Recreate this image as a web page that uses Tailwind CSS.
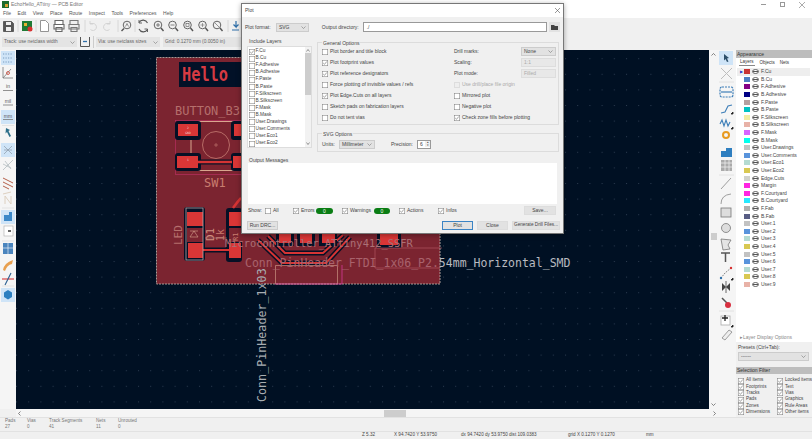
<!DOCTYPE html>
<html lang="en">
<head>
  <meta charset="utf-8" />
  <title>EchoHello_ATtiny — PCB Editor</title>
  <script src="https://cdn.jsdelivr.net/npm/@tailwindcss/browser@4"></script>
</head>
<body class="w-[812px] h-[439px] overflow-hidden bg-[#f0f0f0] font-['Liberation_Sans',sans-serif] text-[#333] text-[5px] leading-none">
<div class="relative flex flex-col w-[812px] h-[439px]">

  <!-- Title bar -->
  <div class="flex items-center h-[9px] bg-white text-[#777] pl-[2px]">
    <svg width="7" height="7" viewBox="0 0 7 7"><rect width="7" height="7" fill="#1d6b2c"/><rect x="3" y="3" width="3" height="3" fill="#d8a030"/></svg>
    <span class="ml-[2px] text-[5px]">EchoHello_ATtiny — PCB Editor</span>
    <div class="ml-auto flex items-center gap-[14px] pr-[7px] text-[#888]">
      <span class="w-[5px] h-[1px] bg-[#999]"></span>
      <span class="w-[5px] h-[5px] border border-[#999]"></span>
      <svg width="6" height="6" viewBox="0 0 6 6"><path d="M0 0L6 6M6 0L0 6" stroke="#888" stroke-width=".7"/></svg>
    </div>
  </div>
  <!-- Menu -->
  <div class="flex items-center h-[9px] bg-white text-[#555] text-[5px] pl-[3px] gap-[6.5px]">
    <span>File</span><span>Edit</span><span>View</span><span>Place</span><span>Route</span><span>Inspect</span><span>Tools</span><span>Preferences</span><span>Help</span>
  </div>
  <!-- Main toolbar -->
  <div class="flex items-center h-[16px] pl-[3px]">
    <svg width="236" height="16" viewBox="3 18 236 16" fill="none" stroke="#555" stroke-width=".9">
      <path d="M3.5 21.5h8l2 2v8h-10z" fill="#555"/><rect x="6" y="22" width="5" height="3" fill="#eee" stroke="none"/><rect x="6" y="27" width="5" height="4" fill="#eee" stroke="none"/>
      <path d="M18 20v12M36 20v12M85 20v12M118 20v12M135 20v12M228 20v12" stroke="#d4d4d4"/>
      <rect x="22" y="21" width="10" height="10" fill="#1f7a35" stroke="none"/><rect x="24" y="23" width="3" height="3" fill="#e8b030" stroke="none"/><circle cx="30" cy="29" r="2.5" fill="#d83030" stroke="none"/>
      <path d="M40.5 20.5h5l3 3v8h-8z" fill="#fff" stroke="#888"/>
      <path d="M55 24v-3.500h8v3.500M54 24.500h10v4.500h-10zM56 27.500h6v4h-6z" fill="#fff" stroke="#666" stroke-width="1.100"/>
      <path d="M70 24v-3.500h8v3.500M69 24.500h10v4.500h-10zM71 27.500h6v4h-6z" fill="#eee" stroke="#777" stroke-width="1.100"/>
      <path d="M90 23.500h3a3.500 3.500 0 1 1-2.500 6M90 21v3h3" stroke="#d0d0d0"/>
      <path d="M110 23.500h-3a3.500 3.500 0 1 0 2.500 6M110 21v3h-3" stroke="#d0d0d0"/>
      <circle cx="127" cy="25" r="3.800"/><path d="M124 28.500l-2.500 2.500" stroke-width="1.400"/><path d="M125.500 26.500l1.500-3 1.500 3" stroke-width=".6"/>
      <path d="M147.500 23a4.800 4.800 0 0 0-8.500-.5M139 29a4.800 4.800 0 0 0 8.500.5" stroke-width="1.100"/><path d="M139 20v3h3M147.500 32v-3h-3"/>
      <circle cx="158" cy="25" r="3.800"/><path d="M161 28l2.500 3" stroke-width="1.400"/><path d="M156 25h4M158 23v4" stroke-width=".7"/>
      <circle cx="172.500" cy="25" r="3.800"/><path d="M175.500 28l2.500 3" stroke-width="1.400"/><path d="M170.500 25h4" stroke-width=".7"/>
      <circle cx="187.500" cy="25" r="3.800"/><path d="M190.500 28l2.500 3" stroke-width="1.400"/><rect x="186" y="23.500" width="3" height="3" stroke-width=".6"/>
      <circle cx="202.500" cy="25" r="3.800"/><path d="M205.500 28l2.500 3" stroke-width="1.400"/><path d="M200.500 25h4M202.500 23v4" stroke-width=".5"/>
      <circle cx="217" cy="25" r="3.800"/><path d="M220 28l2.500 3" stroke-width="1.400"/><path d="M215 23l4 4" stroke-width=".6"/>
      <path d="M232 30h7M236 21v6l-2.500-2.500M236 27l2.500-2.500" stroke="#2f6fa8" stroke-width="1.200"/>
    </svg>
  </div>
  <!-- Track / via / grid toolbar -->
  <div class="flex items-center h-[16px] pl-[2px] text-[#666] text-[4.8px]">
    <div class="flex items-center justify-between w-[75px] h-[10px] bg-[#e4e4e4] px-[2px]"><span>Track: use netclass width</span><svg width="5" height="3" viewBox="0 0 5 3"><path d="M.5.5l2 2 2-2" fill="none" stroke="#777" stroke-width=".6"/></svg></div>
    <svg class="ml-[2px]" width="12" height="12" viewBox="0 0 12 12" fill="none"><path d="M1.500 1v9.500h9V1" stroke="#555"/><path d="M4 5.500h4" stroke="#2f6fa8" stroke-width="1.300"/></svg>
    <span class="w-[1px] h-[12px] bg-[#ccc] ml-[2px]"></span>
    <div class="flex items-center justify-between w-[64px] h-[10px] bg-[#e4e4e4] px-[2px] ml-[2px]"><span>Via: use netclass sizes</span><svg width="5" height="3" viewBox="0 0 5 3"><path d="M.5.5l2 2 2-2" fill="none" stroke="#777" stroke-width=".6"/></svg></div>
    <div class="flex items-center w-[78px] h-[10px] bg-[#e4e4e4] px-[2px] ml-[3px]"><span>Grid: 0.1270 mm (0.0050 in)</span></div>
  </div>

  <!-- Workspace -->
  <div class="flex flex-1 min-h-0">
    <div class="flex flex-col flex-1 min-w-0">
      <div class="flex flex-1 min-h-0">
        <!-- Left toolbar -->
        <div class="w-[16px] bg-[#f5f5f5] shrink-0">
          <svg width="16" height="359" viewBox="0 50 16 359" fill="none" stroke="#666" stroke-width=".8" font-family="'Liberation Sans', sans-serif">
            <g fill="#cfe4f7" stroke="none"><rect x="1" y="51" width="14" height="14"/><rect x="1" y="110" width="14" height="14"/><rect x="1" y="143" width="14" height="14"/><rect x="1" y="210" width="14" height="14"/><rect x="1" y="288" width="14" height="14"/></g>
            <path d="M3 54h10M3 58h10M3 62h10" stroke="#7a9cc0" stroke-width="1.200" stroke-dasharray="1.200 1.300"/>
            <path d="M3 67v11h10M3 78l8-9" stroke="#777"/><circle cx="8" cy="73" r="1.500" stroke="#c43"/>
            <text x="8" y="88" font-size="5" fill="#555" stroke="none" text-anchor="middle">in</text><path d="M3 90.500h10" stroke="#777"/>
            <text x="8" y="103" font-size="5" fill="#555" stroke="none" text-anchor="middle">mil</text><path d="M3 105h10" stroke="#777"/>
            <text x="8" y="118" font-size="5" fill="#555" stroke="none" text-anchor="middle">mm</text><path d="M3 119.500h10" stroke="#777"/>
            <path d="M6 128l4 2-1.500 1 2.500 5-1.500 1-2.500-5-1.500 1.500z" fill="#2d6f8a" stroke="none"/>
            <path d="M4 146l8 8M12 146l-8 8M4 150h8" stroke="#8a99a6" stroke-width=".7"/>
            <path d="M3 170l10-10M5 161l6 8M3 164l8 4" stroke="#b4bcc0" stroke-width=".8"/>
            <path d="M3 178l10 5M3 182l10 5M3 186l6 3" stroke="#b5604a" stroke-width="1"/>
            <path d="M3 194l8-2M5 204v-8l6 8v-8" stroke="#ddd0c0" stroke-width="1"/>
            <path d="M4 221v-6h5v-3h3v9z" fill="#3c88c8" stroke="none"/>
            <rect x="4" y="226" width="9" height="10" stroke="#aaa" fill="#fff" stroke-width=".6"/><path d="M8 230h3v2h-3z" fill="#666" stroke="none"/>
            <rect x="3" y="243" width="10" height="11" fill="#4a84bd" stroke="none"/><path d="M3 248h10M8 243v11" stroke="#fff" stroke-width=".6"/>
            <path d="M3 270q1-7 10-10l-1 4q-5 1-7 7z" fill="#e8a050" stroke="none"/>
            <path d="M2 279h12" stroke="#d83a3a" stroke-width="1.100"/><path d="M11 273l-6 12" stroke="#2b5f90" stroke-width="1.100"/>
            <path d="M8 290l4 2.500v4.500l-4 2.500-4-2.500v-4.500z" fill="#2c7fc0" stroke="none"/>
            <path d="M2 125.500h12M2 208h12M2 241h12M2 286h12" stroke="#ddd" stroke-width=".7"/>
          </svg>
        </div>
        <!-- Canvas -->
        <div class="relative flex-1 min-w-0 bg-[#001023] overflow-hidden">
          <svg class="absolute inset-0 w-full h-full" viewBox="16 50 693 359" fill="none" font-family="'DejaVu Sans Mono', monospace">
            <defs>
              <pattern id="dots" x="16" y="42.600" width="12.200" height="15.600" patternUnits="userSpaceOnUse"><rect width="1" height="1" fill="#2c3c50"/></pattern>
              <linearGradient id="connfill" gradientUnits="userSpaceOnUse" x1="245" y1="0" x2="570" y2="0">
                <stop offset="0.6" stop-color="#a9626c"/><stop offset="0.6" stop-color="#b9bcc2"/>
              </linearGradient>
            </defs>
            <rect x="16" y="50" width="693" height="359" fill="url(#dots)"/>
            <!-- board -->
            <rect x="156.500" y="57.500" width="283.500" height="226.500" fill="#7b2430" stroke="#a89a96" stroke-dasharray="2 1"/>
            <rect x="179" y="62" width="70" height="25" fill="#021127"/>
            <text x="182" y="81" font-size="19" font-weight="bold" fill="#d63a42" textLength="46" lengthAdjust="spacingAndGlyphs">Hello</text>
            <text x="175" y="115" font-size="12" fill="#b56f6c">BUTTON_B3</text>
            <!-- SW1 -->
            <rect x="175.500" y="120.500" width="82" height="54" stroke="#b83060" stroke-width=".7"/>
            <rect x="191" y="121.500" width="50" height="49" stroke="#d9a58e" stroke-width="1"/>
            <circle cx="216" cy="145" r="13.500" stroke="#d08a7d" stroke-width=".7"/>
            <path d="M214 145h4M216 143v4" stroke="#d08a7d" stroke-width=".5"/>
            <rect x="175" y="121" width="26" height="19" rx="3" fill="#061025"/><rect x="231" y="121" width="26" height="19" rx="3" fill="#061025"/>
            <rect x="175" y="153" width="26" height="18" rx="3" fill="#061025"/><rect x="231" y="153" width="26" height="18" rx="3" fill="#061025"/>
            <path d="M198 162h34" stroke="#061025" stroke-width="5"/><path d="M198 162h34" stroke="#d63434" stroke-width="2.500"/>
            <rect x="178" y="124" width="20" height="12" fill="#d93636"/><rect x="234" y="124" width="20" height="12" fill="#d93636"/>
            <rect x="177" y="156" width="21" height="12" fill="#d93636"/><rect x="233" y="156" width="21" height="12" fill="#d93636"/>
            <text x="188" y="129" font-size="3" fill="#f0d0d0" text-anchor="middle">2</text><text x="188" y="134" font-size="3" fill="#f0d0d0" text-anchor="middle">GND</text>
            <text x="188" y="161" font-size="3" fill="#f0d0d0" text-anchor="middle">1</text>
            <text x="204" y="187" font-size="12" fill="#c97d6f">SW1</text>
            <!-- LED / R1 -->
            <rect x="184" y="207" width="21" height="54" rx="3" fill="#061025"/><rect x="226" y="208" width="16" height="54" rx="3" fill="#061025"/>
            <rect x="187" y="228" width="16" height="14" fill="#7b2430"/><rect x="229" y="228" width="13" height="14" fill="#7b2430"/>
            <path d="M200 250h30" stroke="#061025" stroke-width="5"/><path d="M200 250h30" stroke="#d63434" stroke-width="2"/>
            <rect x="187" y="212" width="16" height="14" fill="#d93636"/><rect x="188" y="243" width="15" height="15" fill="#d93636"/>
            <rect x="229" y="212" width="12" height="14" fill="#d93636"/><rect x="229" y="243" width="12" height="15" fill="#d93636"/>
            <rect x="186" y="208" width="17" height="52" stroke="#b8a8a8" stroke-width=".8"/>
            <path d="M190 237h8l-4-6zM190 231h8" stroke="#d9a58e" stroke-width=".6"/>
            <path d="M233 208q6-8 8-10" stroke="#d63434" stroke-width="2.500"/>
            <text transform="translate(182 245) rotate(-90)" font-size="11" fill="#b56f6c">LED</text>
            <text transform="translate(214 241) rotate(-90)" font-size="11" fill="#d09080">D1</text>
            <text transform="translate(224 241) rotate(-90)" font-size="10" fill="#c97d6f">1k</text>
            <text transform="translate(238 241) rotate(-90)" font-size="7" fill="#c97d6f">R1</text>
            <path d="M205 238h22" stroke="#b0827a" stroke-width=".6"/>
            <!-- MCU pads and traces -->
            <path d="M258 240l24 23h44l24-26M268 236l17 17h38l20-18" stroke="#061025" stroke-width="5"/>
            <path d="M258 240l24 23h44l24-26M268 236l17 17h38l20-18" stroke="#d63434" stroke-width="2"/>
            <rect x="276" y="230" width="18" height="16" fill="#061025"/><rect x="297" y="230" width="18" height="16" fill="#061025"/><rect x="319" y="230" width="18" height="16" fill="#061025"/><rect x="377" y="230" width="24" height="18" fill="#061025"/>
            <rect x="279" y="230" width="12" height="13" fill="#d93636"/><rect x="300" y="230" width="12" height="13" fill="#d93636"/><rect x="322" y="230" width="13" height="13" fill="#d93636"/><rect x="380" y="230" width="18" height="15" fill="#d93636"/>
            <path d="M275.500 265.500h62v18.500h-62z" stroke="#d9a58e" stroke-width=".6"/>
            <path d="M275 284h67v-19" stroke="#d63a9a" stroke-width=".8"/>
            <path d="M375 248h67M375 248v20h65" stroke="#b85a6a" stroke-width=".6"/>
            <text x="225" y="247" font-size="10.400" fill="#ab7076">Microcontroller_ATtiny412_SSFR</text>
            <text x="245" y="267" font-size="11.500" fill="url(#connfill)">Conn_PinHeader_FTDI_1x06_P2.54mm_Horizontal_SMD</text>
            <text transform="translate(266 402) rotate(-90)" font-size="11.700" fill="#a8adb2">Conn_PinHeader_1x03</text>
          </svg>
        </div>
        <!-- Vertical scrollbar -->
        <div class="flex flex-col items-center justify-between w-[9px] py-[3px] bg-[#f5f5f5] text-[#555] shrink-0">
          <svg width="5" height="3" viewBox="0 0 5 3"><path d="M.5 2.500l2-2 2 2" fill="none" stroke="#555" stroke-width=".7"/></svg>
          <span class="w-[6px] h-[7px] bg-[#cdcdcd] mt-[14px]"></span>
          <svg width="5" height="3" viewBox="0 0 5 3"><path d="M.5.500l2 2 2-2" fill="none" stroke="#555" stroke-width=".7"/></svg>
        </div>
      </div>
      <!-- Horizontal scrollbar -->
      <div class="flex items-center justify-between h-[8px] ml-[16px] bg-[#f5f5f5] px-[2px]">
        <svg width="3" height="5" viewBox="0 0 3 5"><path d="M2.500.500l-2 2 2 2" fill="none" stroke="#555" stroke-width=".7"/></svg>
        <span class="w-[22px] h-[7px] bg-[#cdcdcd] ml-[56px]"></span>
        <svg width="3" height="5" viewBox="0 0 3 5"><path d="M.5.500l2 2-2 2" fill="none" stroke="#555" stroke-width=".7"/></svg>
      </div>
    </div>

    <!-- Right toolbar -->
    <div class="w-[18px] bg-[#f5f5f5] shrink-0">
      <svg width="18" height="367" viewBox="718 50 18 367" fill="none" stroke="#777" stroke-width=".8">
        <rect x="719" y="51" width="14" height="14" fill="#cfe4f7" stroke="none"/>
        <path d="M724 54l5 4-2 .5 1.500 3-1.500.5-1.500-3-1.500 1.500z" fill="#2d4f6a" stroke="none"/>
        <path d="M721 68l11 11M732 68l-11 11" stroke="#bdbdbd" stroke-width="1"/>
        <path d="M719 82h15" stroke="#ddd"/>
        <rect x="720" y="87" width="13" height="10" rx="2" stroke="#3f7fb8" stroke-dasharray="2 1" stroke-width="1.200"/><path d="M721 92h11" stroke="#3f7fb8" stroke-width="1.200"/>
        <path d="M721 113l4-1 3-6 4-1" stroke="#3f7fb8" stroke-width="1.100"/><path d="M731 114h2v-2z" fill="#222" stroke="#222"/>
        <path d="M720 124l2-4 2 6 2-6 2 6 2-4" stroke="#3f7fb8" stroke-width="1.100"/><path d="M731 129h2v-2z" fill="#222" stroke="#222"/>
        <circle cx="726" cy="135" r="3" stroke="#e89a20" stroke-width="2"/>
        <path d="M721 157v-6h5v-3h6v9z" fill="#2f7fc0" stroke="none"/>
        <rect x="721" y="160" width="11" height="11" fill="#aaa" stroke="none"/><path d="M721 163h11M721 167h11M725 160v11M729 160v11" stroke="#eee" stroke-width=".8"/>
        <path d="M719 175h15" stroke="#ddd"/>
        <path d="M721 189l10-11" stroke="#888"/>
        <path d="M721 204q0-9 10-10" stroke="#888"/>
        <rect x="721" y="208" width="10" height="9" fill="#ddd" stroke="#777"/>
        <circle cx="726" cy="228" r="4.500" fill="#ddd" stroke="#777"/>
        <path d="M721 239l10 1-3 5 2 4-7 1z" fill="#e4e4e4" stroke="#777"/>
        <path d="M721 253h9M725.500 253v9" stroke="#555" stroke-width="1.500"/>
        <path d="M721 278l4-5 6-5" stroke="#666" stroke-dasharray="1.500 1"/><circle cx="721" cy="278" r="1.200" fill="#2f6fa8" stroke="none"/><circle cx="731" cy="268" r="1.200" fill="#d83030" stroke="none"/><path d="M731 280h2v-2z" fill="#222" stroke="#222"/>
        <path d="M722 283l4 4-4 4zM730 283l-4 4 4 4z" fill="#444" stroke="none"/><path d="M726 281v12" stroke="#444"/>
        <path d="M722 298l5 5" stroke="#555" stroke-width="1.500"/><circle cx="728" cy="305" r="3" fill="#d83040" stroke="none"/>
        <path d="M719 311h15" stroke="#ddd"/>
        <rect x="721" y="316" width="9" height="9" stroke="#aaa" fill="#fff"/><path d="M725 315v6M722 318h6" stroke="#222" stroke-width="1.300"/><path d="M731 327h2v-2z" fill="#222" stroke="#222"/>
        <path d="M722 338l7-8 3 2-7 8z" stroke="#888" fill="#eee"/>
      </svg>
    </div>

    <!-- Appearance + selection filter -->
    <div class="flex flex-col w-[76px] shrink-0 text-[#444]">
      <div class="flex items-center h-[8px] bg-[#bdbdbd] pl-[1px] text-[#333]">Appearance</div>
      <div class="flex flex-col h-[284px] bg-white">
        <div class="flex items-center gap-[5px] h-[10px] pl-[3px] text-[4.500px] text-[#333]">
          <span class="px-[1px] border-b border-[#888]">Layers</span><span>Objects</span><span>Nets</span>
        </div>
        <div id="layers" class="flex flex-col ml-[1px]"></div>
        <div class="mt-auto h-[9px] flex items-center pl-[4px] text-[#888]">▸Layer Display Options</div>
      </div>
      <div class="flex-1 flex flex-col bg-[#f0f0f0]">
        <span class="mt-[3px] ml-[2px]">Presets (Ctrl+Tab):</span>
        <div class="flex items-center justify-between w-[71px] h-[9px] mt-[2px] ml-[2px] bg-[#e2e2e2] border border-[#ccc] px-[2px]"><span>------</span><svg width="5" height="3" viewBox="0 0 5 3"><path d="M.5.500l2 2 2-2" fill="none" stroke="#777" stroke-width=".6"/></svg></div>
        <div class="flex items-center h-[7px] mt-[6px] bg-[#bdbdbd] pl-[1px] text-[#333]">Selection Filter</div>
        <div id="filter" class="grid grid-cols-[39px_1fr] auto-rows-[6.300px] pl-[2px] pt-[3.500px] text-[4.600px]"></div>
      </div>
    </div>
  </div>

  <!-- Message panel -->
  <div class="flex h-[14px] pl-[5px] text-[#777] text-[4.600px] border-t border-[#e2e2e2]">
    <div class="w-[22px] flex flex-col gap-[1.500px] pt-[1px]"><span>Pads</span><span>27</span></div>
    <div class="w-[22px] flex flex-col gap-[1.500px] pt-[1px]"><span>Vias</span><span>0</span></div>
    <div class="w-[47px] flex flex-col gap-[1.500px] pt-[1px]"><span>Track Segments</span><span>41</span></div>
    <div class="w-[22px] flex flex-col gap-[1.500px] pt-[1px]"><span>Nets</span><span>11</span></div>
    <div class="flex flex-col gap-[1.500px] pt-[1px]"><span>Unrouted</span><span>0</span></div>
  </div>
  <!-- Status bar -->
  <div class="flex items-center h-[8px] pl-[362px] text-[#444] text-[4.600px] border-t border-[#e2e2e2]">
    <span class="w-[32px]">Z 5.32</span><span class="w-[67px]">X 94.7420 Y 53.9750</span><span class="w-[107px]">dx 94.7420 dy 53.9750 dist 109.0383</span><span class="w-[78px]">grid X 0.1270 Y 0.1270</span><span>mm</span>
  </div>

  <!-- Plot dialog -->
  <div class="absolute left-[241px] top-[3px] w-[323px] h-[231px] flex flex-col bg-[#f0f0f0] border border-[#777] shadow-[0_1px_5px_rgba(0,0,0,0.35)] text-[#444] text-[5px]">
    <div class="flex items-center justify-between h-[13px] bg-white pl-[3px] pr-[3px] shrink-0">
      <span>Plot</span>
      <svg width="5" height="5" viewBox="0 0 5 5"><path d="M0 0L5 5M5 0L0 5" stroke="#555" stroke-width=".6"/></svg>
    </div>
    <div class="flex items-center h-[20px] pl-[3px] pr-[3px] shrink-0">
      <span class="w-[31px]">Plot format:</span>
      <div class="flex items-center justify-between w-[33px] h-[9px] bg-[#e2e2e2] border border-[#ccc] px-[2px]"><span>SVG</span><svg width="5" height="3" viewBox="0 0 5 3"><path d="M.5.500l2 2 2-2" fill="none" stroke="#777" stroke-width=".6"/></svg></div>
      <span class="ml-[13px] w-[41px]">Output directory:</span>
      <div class="w-[185px] h-[10px] bg-white border border-[#999] flex items-center pl-[3px]">./</div>
      <div class="ml-[2px] w-[11px] h-[10px] bg-[#e2e2e2] flex items-center justify-center"><svg width="7" height="5" viewBox="0 0 7 5"><path d="M0 0h3l1 1h3v4h-7z" fill="#444"/></svg></div>
    </div>
    <div class="flex pl-[5px] pr-[4px] shrink-0">
      <div class="w-[70px] shrink-0">
        <div class="pl-[2px] pt-[2px] h-[9px]">Include Layers</div>
        <div class="relative flex w-[65px] h-[102px] overflow-hidden bg-white border border-[#ddd]">
          <div id="plotlayers" class="flex flex-col pl-[1px] pt-[1px] flex-1 text-[4.800px]"></div>
          <div class="flex flex-col items-center justify-between w-[6px] py-[2px] bg-[#f2f2f2]">
            <svg width="4" height="3" viewBox="0 0 4 3"><path d="M.5 2.500l1.500-2 1.500 2" fill="none" stroke="#555" stroke-width=".6"/></svg>
            <span class="w-[6px] h-[42px] bg-[#cdcdcd] mb-[47px]"></span>
            <svg width="4" height="3" viewBox="0 0 4 3"><path d="M.5.500l1.500 2 1.500-2" fill="none" stroke="#555" stroke-width=".6"/></svg>
          </div>
        </div>
      </div>
      <div class="flex flex-col flex-1">
        <div class="h-[83px] border border-[#dcdcdc] mt-[5px] relative">
          <span class="absolute left-[4px] -top-[2px] bg-[#f0f0f0] px-[1px]">General Options</span>
          <div class="flex pl-[4px] pt-[3px]">
            <div id="genleft" class="flex flex-col w-[132px]"></div>
            <div class="flex flex-col w-[102px]">
              <div class="flex items-center justify-between h-[11px]"><span>Drill marks:</span><div class="flex items-center justify-between w-[35px] h-[9px] bg-[#e2e2e2] border border-[#ccc] px-[2px]"><span>None</span><svg width="5" height="3" viewBox="0 0 5 3"><path d="M.5.500l2 2 2-2" fill="none" stroke="#777" stroke-width=".6"/></svg></div></div>
              <div class="flex items-center justify-between h-[11px]"><span>Scaling:</span><div class="flex items-center w-[35px] h-[9px] bg-[#e8e8e8] border border-[#ddd] px-[2px] text-[#aaa]">1:1</div></div>
              <div class="flex items-center justify-between h-[11px]"><span>Plot mode:</span><div class="flex items-center w-[35px] h-[9px] bg-[#e8e8e8] border border-[#ddd] px-[2px] text-[#aaa]">Filled</div></div>
              <div id="genright" class="flex flex-col"></div>
            </div>
          </div>
        </div>
        <div class="flex items-center h-[19px] mt-[8px] border border-[#dcdcdc] relative pl-[4px]">
          <span class="absolute left-[4px] -top-[2px] bg-[#f0f0f0] px-[1px]">SVG Options</span>
          <span class="w-[17px] mt-[3px]">Units:</span>
          <div class="flex items-center justify-between w-[36px] h-[9px] mt-[3px] bg-[#e2e2e2] border border-[#ccc] px-[2px]"><span>Millimeter</span><svg width="5" height="3" viewBox="0 0 5 3"><path d="M.5.500l2 2 2-2" fill="none" stroke="#777" stroke-width=".6"/></svg></div>
          <span class="ml-[16px] w-[26px] mt-[3px]">Precision:</span>
          <div class="flex items-center justify-between w-[14px] h-[9px] mt-[3px] bg-white border border-[#999] pl-[2px]"><span>6</span><span class="flex flex-col items-center w-[5px] text-[3px] bg-[#eee]"><span>▴</span><span>▾</span></span></div>
        </div>
      </div>
    </div>
    <!-- Output messages -->
    <div class="mt-[6px] mx-[5px] pl-[2px] h-[5px] shrink-0">Output Messages</div>
    <div class="mx-[6px] h-[41px] bg-white shrink-0"></div>
    <div class="flex items-center h-[11px] mt-[1px] mx-[6px] shrink-0">
      <span class="w-[17px]">Show:</span>
      <div id="c-all" class="w-[28px]"></div>
      <div id="c-err" class="w-[23px]"></div>
      <span class="w-[17px] h-[6px] rounded-full bg-[#0a7d14] text-center text-white leading-[6px]">0</span>
      <div id="c-warn" class="ml-[9px] w-[32px]"></div>
      <span class="w-[16px] h-[6px] rounded-full bg-[#0a7d14] text-center text-white leading-[6px]">0</span>
      <div id="c-act" class="ml-[9px] w-[39px]"></div>
      <div id="c-inf" class="w-[30px]"></div>
      <div class="ml-auto mr-[1px] flex items-center justify-center w-[32px] h-[9px] bg-[#e2e2e2] border border-[#ddd]">Save...</div>
    </div>
    <div class="flex items-center mt-[5px] ml-[5px] mr-[3px] h-[9px] shrink-0">
      <div class="flex items-center justify-center w-[31px] h-[9px] bg-[#e2e2e2] border border-[#ccc]">Run DRC...</div>
      <div class="ml-auto flex items-center justify-center w-[31px] h-[9px] bg-[#e2e2e2] border border-[#3b84c4]">Plot</div>
      <div class="ml-[4px] flex items-center justify-center w-[31px] h-[9px] bg-[#e2e2e2] border border-[#ddd]">Close</div>
      <div class="ml-[4px] flex items-center justify-center w-[48px] h-[9px] bg-[#e2e2e2] border border-[#ddd] whitespace-nowrap text-[4.700px]">Generate Drill Files...</div>
    </div>
  </div>
</div>

<script>
  const box = on => `<svg class="shrink-0" width="6" height="6" viewBox="0 0 6 6"><rect x=".25" y=".25" width="5.500" height="5.500" fill="#fff" stroke="#777" stroke-width=".5"/>${on ? '<path d="M1.200 3l1.300 1.300L4.800 1.500" fill="none" stroke="#666" stroke-width=".6"/>' : ''}</svg>`;
  const check = (label, on) => `<div class="flex items-center gap-[2px] whitespace-nowrap">${box(on)}<span>${label}</span></div>`;
  const row = (label, on) => `<div class="flex items-center gap-[2px] h-[11px] whitespace-nowrap">${box(on)}<span>${label}</span></div>`;
  const eye = '<svg width="7" height="5" viewBox="0 0 7 5"><ellipse cx="3.500" cy="2.500" rx="3" ry="2" fill="#fff" stroke="#444" stroke-width=".8"/><path d="M1 2.500h5" stroke="#444" stroke-width=".9"/></svg>';

  const layers = [
    ['F.Cu', 'bg-[#c83434]'], ['B.Cu', 'bg-[#4d7fc4]'], ['F.Adhesive', 'bg-[#840084]'], ['B.Adhesive', 'bg-[#000084]'],
    ['F.Paste', 'bg-[#b4a0a0]'], ['B.Paste', 'bg-[#00c2c2]'], ['F.Silkscreen', 'bg-[#f2eda1]'], ['B.Silkscreen', 'bg-[#e8b2a7]'],
    ['F.Mask', 'bg-[#d864ff]'], ['B.Mask', 'bg-[#02ffee]'], ['User.Drawings', 'bg-[#c2c2c2]'], ['User.Comments', 'bg-[#5994dc]'],
    ['User.Eco1', 'bg-[#b4dbd2]'], ['User.Eco2', 'bg-[#d8c852]'], ['Edge.Cuts', 'bg-[#d0d2cd]'], ['Margin', 'bg-[#ff26e2]'],
    ['F.Courtyard', 'bg-[#ff26e2]'], ['B.Courtyard', 'bg-[#26e9ff]'], ['F.Fab', 'bg-[#afafaf]'], ['B.Fab', 'bg-[#585d84]'],
    ['User.1', 'bg-[#c2c2c2]'], ['User.2', 'bg-[#5994dc]'], ['User.3', 'bg-[#b4dbd2]'], ['User.4', 'bg-[#d8c852]'],
    ['User.5', 'bg-[#c2c2c2]'], ['User.6', 'bg-[#5994dc]'], ['User.7', 'bg-[#b4dbd2]'], ['User.8', 'bg-[#d8c852]'], ['User.9', 'bg-[#e8b2a7]']
  ];
  document.getElementById('layers').innerHTML = layers.map(([name, color], i) => `
    <div class="relative flex items-center h-[7.600px] pl-[7px] gap-[2px] whitespace-nowrap ${i === 0 ? 'bg-[#eeeeee] w-[73px]' : ''}">
      ${i === 0 ? '<span class="absolute left-[3px] text-[4px] text-[#2233cc]">▶</span>' : ''}
      <span class="w-[6px] h-[5px] ${color}"></span>${eye}<span>${name}</span>
    </div>`).join('');

  const plotList = ['F.Cu', 'B.Cu', 'F.Adhesive', 'B.Adhesive', 'F.Paste', 'B.Paste', 'F.Silkscreen', 'B.Silkscreen', 'F.Mask', 'B.Mask', 'User.Drawings', 'User.Comments', 'User.Eco1', 'User.Eco2'];
  document.getElementById('plotlayers').innerHTML = plotList.map((name, i) => `<div class="flex items-center gap-[0.500px] h-[7.100px] whitespace-nowrap">${box(i === 0)}<span>${name}</span></div>`).join('');

  document.getElementById('genleft').innerHTML = [
    ['Plot border and title block', false], ['Plot footprint values', true], ['Plot reference designators', true],
    ['Force plotting of invisible values / refs', false], ['Plot Edge.Cuts on all layers', true],
    ['Sketch pads on fabrication layers', false], ['Do not tent vias', false]
  ].map(r => row(...r)).join('');

  document.getElementById('genright').innerHTML =
    '<div class="flex items-center gap-[2px] h-[11px] text-[#aaa] whitespace-nowrap"><span class="w-[6px] h-[6px] bg-[#eee] border-[0.5px] border-[#ddd]"></span><span>Use drill/place file origin</span></div>' +
    row('Mirrored plot', false) + row('Negative plot', false) + row('Check zone fills before plotting', true);

  document.getElementById('filter').innerHTML = [
    ['All items', true], ['Locked items', true], ['Footprints', true], ['Text', true], ['Tracks', true], ['Vias', true],
    ['Pads', true], ['Graphics', true], ['Zones', true], ['Rule Areas', true], ['Dimensions', true], ['Other items', true]
  ].map(r => check(...r)).join('');

  document.getElementById('c-all').innerHTML = check('All', false);
  document.getElementById('c-err').innerHTML = check('Errors', true);
  document.getElementById('c-warn').innerHTML = check('Warnings', true);
  document.getElementById('c-act').innerHTML = check('Actions', true);
  document.getElementById('c-inf').innerHTML = check('Infos', true);
</script>
</body>
</html>
